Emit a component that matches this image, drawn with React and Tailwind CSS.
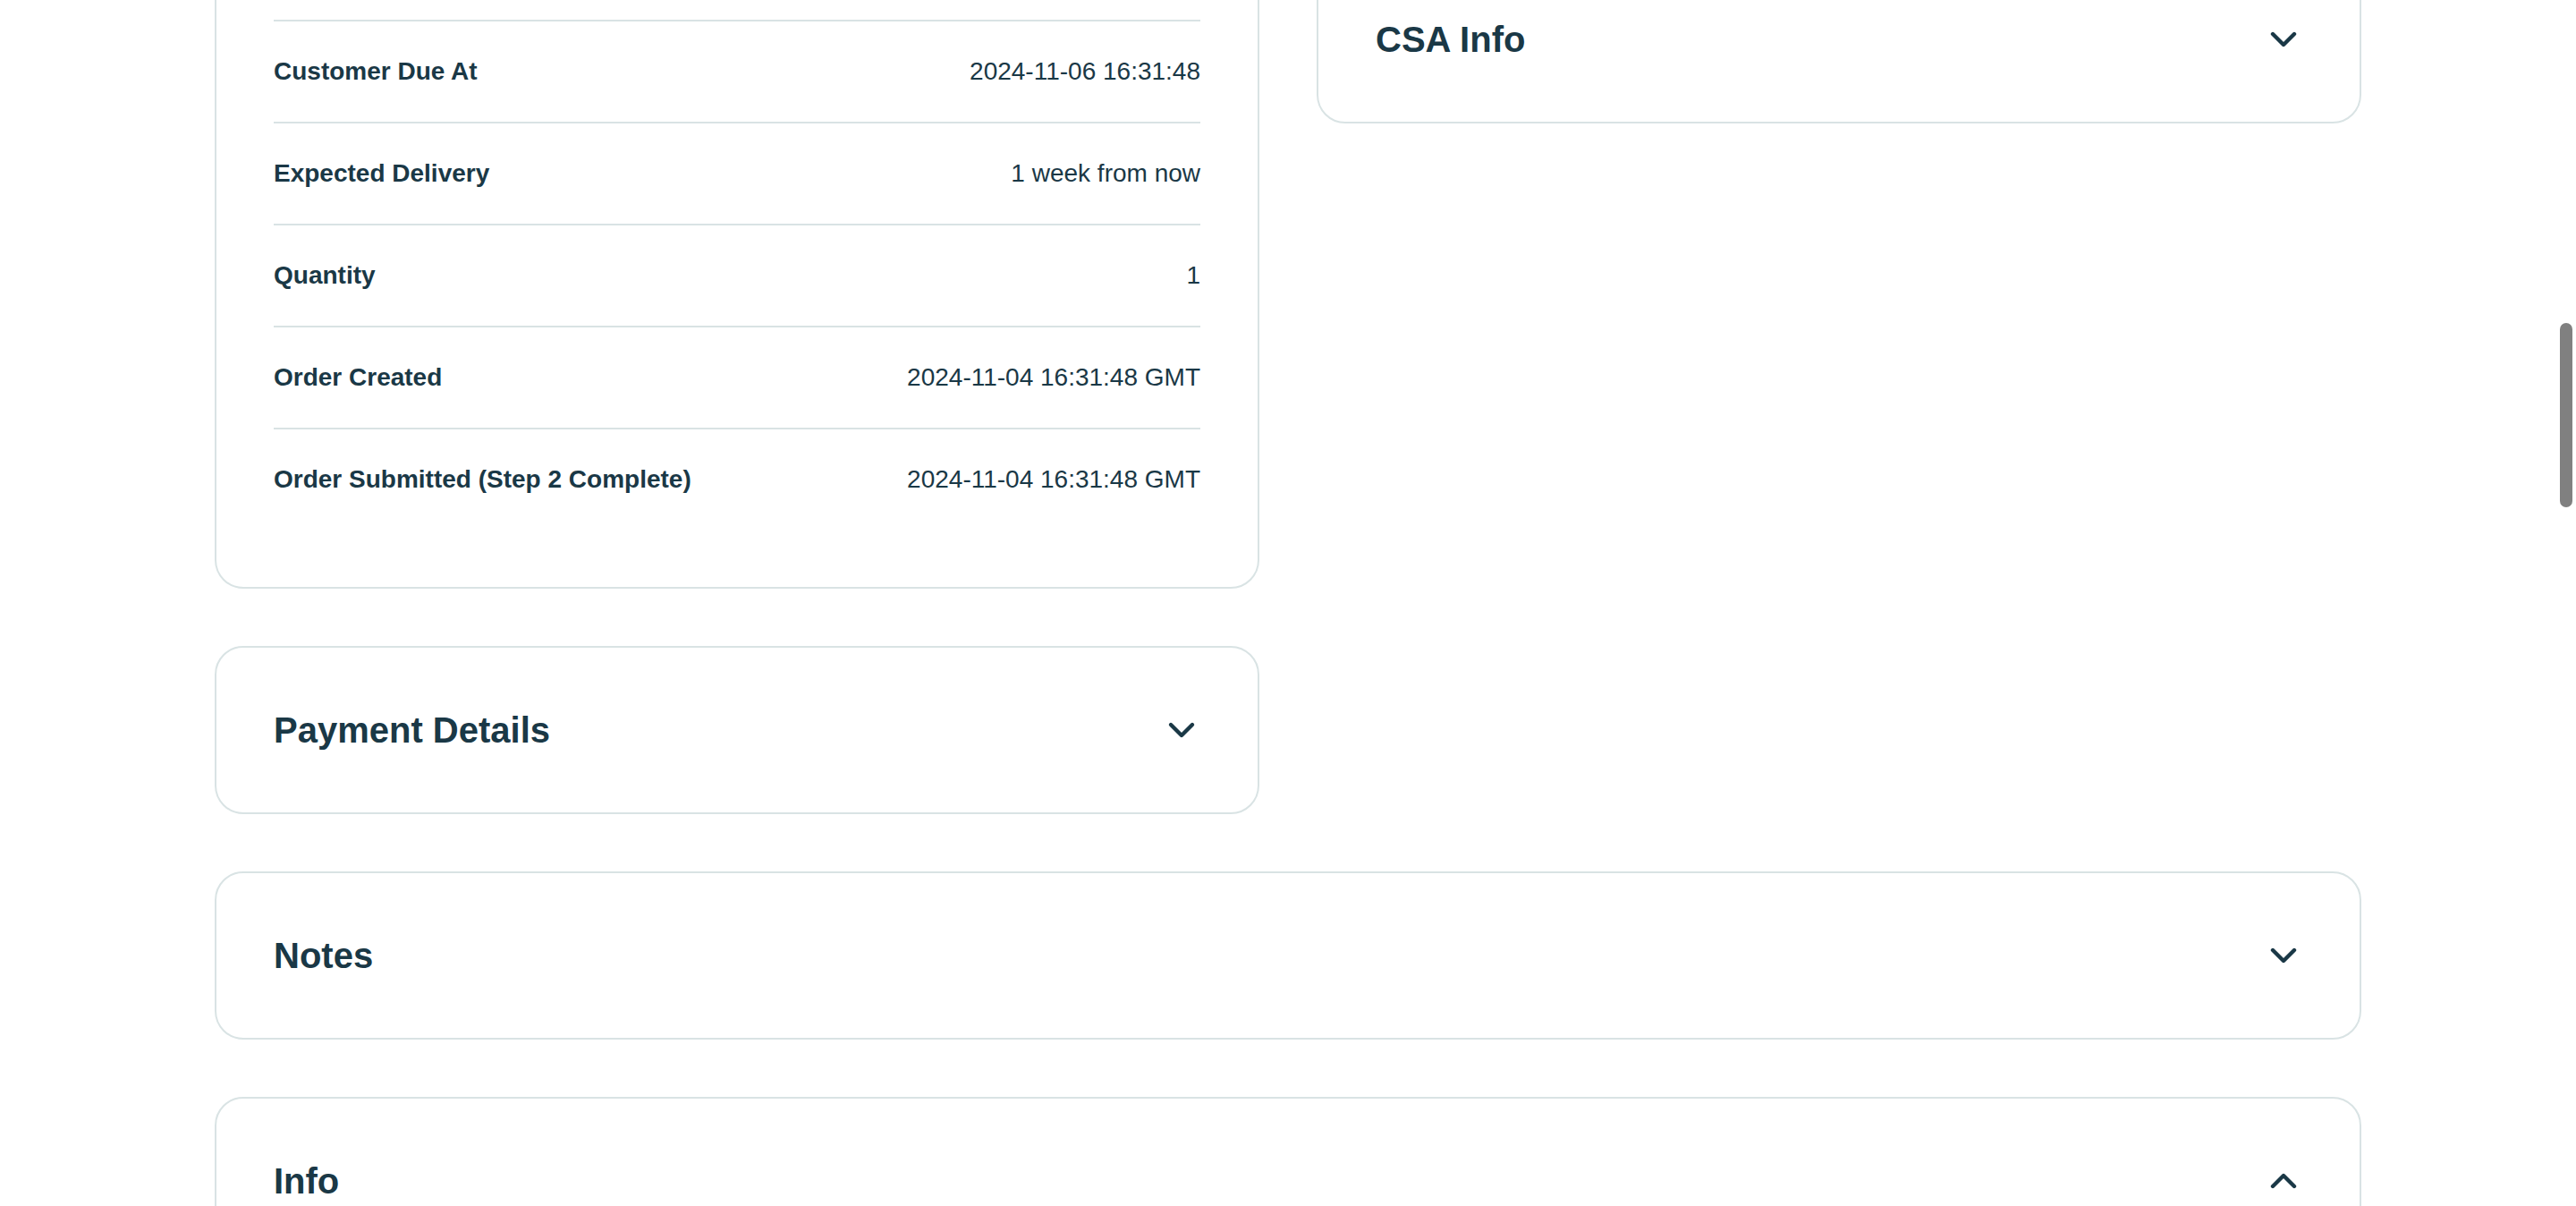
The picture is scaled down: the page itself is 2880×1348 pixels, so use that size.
import React from "react";
import { ChevronDown, ChevronUp } from "lucide-react";

const font = { fontFamily: '"Liberation Sans", Arial, sans-serif' };

function Header({ title, open }) {
  return (
    <div className="flex h-[56px] items-center justify-between">
      <h2 className="text-[40px] font-bold leading-[56px] text-[#1a3846]">{title}</h2>
      <div className="-mr-[3px] flex h-[48px] w-[48px] items-center justify-center text-[#1a3846]">
        {open ? <ChevronUp size={48} strokeWidth={2.2} /> : <ChevronDown size={48} strokeWidth={2.2} />}
      </div>
    </div>
  );
}

function Card({ children, className = "" }) {
  return (
    <div className={"rounded-[32px] border-2 border-[#d9e3e4] bg-white p-16 " + className}>{children}</div>
  );
}

const rows = [
  ["Order Number", "ORD-20241104-0001"],
  ["Status", "Submitted"],
  ["Service", "Standard"],
  ["Customer Due At", "2024-11-06 16:31:48"],
  ["Expected Delivery", "1 week from now"],
  ["Quantity", "1"],
  ["Order Created", "2024-11-04 16:31:48 GMT"],
  ["Order Submitted (Step 2 Complete)", "2024-11-04 16:31:48 GMT"],
];

export default function App() {
  return (
    <div className="relative h-[1348px] w-full overflow-hidden bg-white text-[#1a3846]" style={font}>
      <div className="mx-auto mt-[-474px] flex w-[2400px] flex-col gap-[64px]">
        <div className="grid grid-cols-2 items-start gap-[64px]">
          <div className="flex flex-col gap-[64px]">
            <Card>
              <Header title="Order Details" open />
              <div className="mt-8 flex flex-col">
                {rows.map(([label, value]) => (
                  <div
                    key={label}
                    className="flex h-[114px] items-center justify-between border-t-2 border-[#d9e3e4] text-[28px] leading-[40px]"
                  >
                    <span className="font-bold">{label}</span>
                    <span>{value}</span>
                  </div>
                ))}
              </div>
            </Card>
            <Card>
              <Header title="Payment Details" />
            </Card>
          </div>
          <div className="flex flex-col gap-[64px]">
            <Card className="h-[360px]">
              <Header title="Customer Info" />
            </Card>
            <Card>
              <Header title="CSA Info" />
            </Card>
          </div>
        </div>
        <Card>
          <Header title="Notes" />
        </Card>
        <Card>
          <Header title="Info" open />
          <div className="mt-8 h-[400px]" />
        </Card>
      </div>
      <div className="absolute left-[2862px] top-[361px] h-[206px] w-[14px] rounded-full bg-[#808080]" />
    </div>
  );
}
